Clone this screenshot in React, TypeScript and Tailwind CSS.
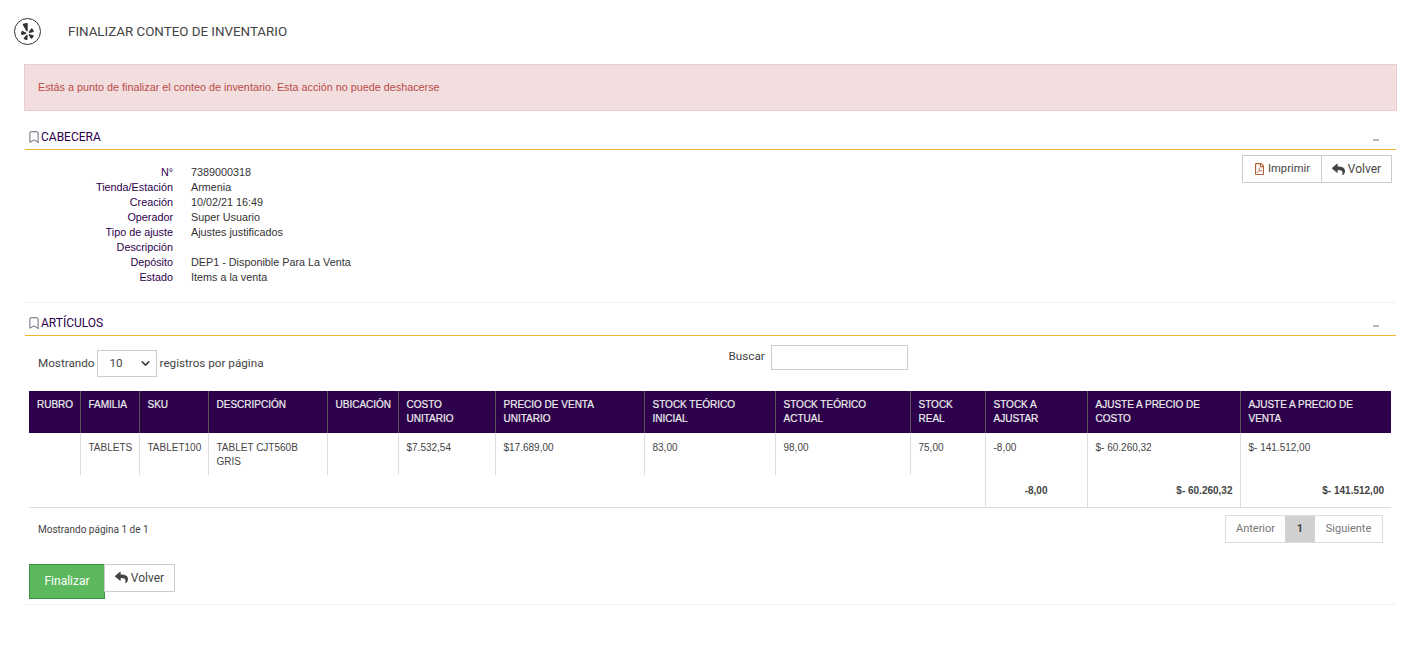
import { FaYelp, FaRegFilePdf, FaReply } from "react-icons/fa";
import { Bookmark, ChevronDown } from "lucide-react";

const headerInfo: [string, string][] = [
  ["N°", "7389000318"],
  ["Tienda/Estación", "Armenia"],
  ["Creación", "10/02/21 16:49"],
  ["Operador", "Super Usuario"],
  ["Tipo de ajuste", "Ajustes justificados"],
  ["Descripción", ""],
  ["Depósito", "DEP1 - Disponible Para La Venta"],
  ["Estado", "Items a la venta"],
];

const columns: { label: string; width: string }[] = [
  { label: "RUBRO", width: "w-[51px]" },
  { label: "FAMILIA", width: "w-[59px]" },
  { label: "SKU", width: "w-[69px]" },
  { label: "DESCRIPCIÓN", width: "w-[119px]" },
  { label: "UBICACIÓN", width: "w-[71px]" },
  { label: "COSTO UNITARIO", width: "w-[97px]" },
  { label: "PRECIO DE VENTA UNITARIO", width: "w-[149px]" },
  { label: "STOCK TEÓRICO INICIAL", width: "w-[131px]" },
  { label: "STOCK TEÓRICO ACTUAL", width: "w-[135px]" },
  { label: "STOCK REAL", width: "w-[75px]" },
  { label: "STOCK A AJUSTAR", width: "w-[102px]" },
  { label: "AJUSTE A PRECIO DE COSTO", width: "w-[153px]" },
  { label: "AJUSTE A PRECIO DE VENTA", width: "w-[151px]" },
];

const row = [
  "",
  "TABLETS",
  "TABLET100",
  "TABLET CJT560B GRIS",
  "",
  "$7.532,54",
  "$17.689,00",
  "83,00",
  "98,00",
  "75,00",
  "-8,00",
  "$- 60.260,32",
  "$- 141.512,00",
];

const SectionTitle = ({ title }: { title: string }) => (
  <div className="flex h-[26px] items-center justify-between border-b border-[#f0b432] pl-[2px] pr-[17px] font-['Roboto',sans-serif] text-xs text-[#2d004b]">
    <span className="flex items-center">
      <Bookmark className="h-[14px] w-[14px] text-[#5a6070]" strokeWidth={1.6} />
      {title}
    </span>
    <span className="mt-[6px] h-[2px] w-[6px] bg-[#bbb]" />
  </div>
);

const BackButton = ({ className }: { className: string }) => (
  <button
    type="button"
    className={`flex items-center justify-center gap-[3px] border border-[#ccc] bg-white text-xs text-[#444] ${className}`}
  >
    <FaReply className="h-[13px] w-[13px] text-[#444]" />
    Volver
  </button>
);

const App = () => {
  return (
    <main className="min-h-[657px] bg-white font-['Liberation_Sans',sans-serif]">
      <header className="flex h-[64px] items-center pl-[14px] pb-[1px]">
        <span className="flex h-[27px] w-[27px] items-center justify-center rounded-full border border-[#333]">
          <FaYelp className="h-[17px] w-[17px] text-[#333]" />
        </span>
        <h1 className="ml-[27px] mt-[1px] font-['Roboto',sans-serif] text-[13.35px] font-normal text-[#444]">
          FINALIZAR CONTEO DE INVENTARIO
        </h1>
      </header>

      <div className="ml-[24px] mr-[21px] flex h-[47px] items-center border border-[#ebccd1] bg-[#f2dede] px-[13px] text-[10.8px] text-[#b94a48]">
        Estás a punto de finalizar el conteo de inventario. Esta acción no puede deshacerse
      </div>

      <section className="ml-[25px] mr-[22px] mt-[13px] h-[179px] border-b border-[#f0f0f0]">
        <SectionTitle title="CABECERA" />
        <div className="flex justify-between pr-[4px]">
          <dl className="mt-[15px] grid grid-cols-[148px_1fr] gap-x-[18px] text-[10.8px] leading-[15px] text-[#333]">
            {headerInfo.map(([label, value]) => (
              <div key={label} className="contents">
                <dt className="text-right text-[#2d004b]">{label}</dt>
                <dd>{value}</dd>
              </div>
            ))}
          </dl>
          <div className="mt-[5px] flex h-[28px] font-['Roboto',sans-serif]">
            <button
              type="button"
              className="flex w-[80px] items-center justify-center gap-[3px] border border-[#ccc] bg-white text-[11.2px] text-[#444]"
            >
              <FaRegFilePdf className="h-[12px] w-[11px] text-[#b5613c]" />
              Imprimir
            </button>
            <BackButton className="-ml-px w-[71px]" />
          </div>
        </div>
      </section>

      <section className="ml-[25px] mr-[22px] mt-[7px]">
        <SectionTitle title="ARTÍCULOS" />
        <div className="relative flex h-[55px] items-start pl-[13px] pt-[14px] font-['Roboto',sans-serif] text-[11.7px] text-[#444]">
          <span className="leading-[27px]">Mostrando</span>
          <div className="ml-[2px] mr-[3px] flex h-[27px] w-[60px] items-center justify-between border border-[#ccc] pl-[12px] pr-[4px]">
            10
            <ChevronDown className="h-[13px] w-[13px] text-[#444]" strokeWidth={3} />
          </div>
          <span className="leading-[27px]">registros por página</span>
          <div className="ml-[465px] -mt-[5px] flex items-center gap-[6px]">
            <span className="mb-[2px]">Buscar</span>
            <span className="h-[25px] w-[137px] border border-[#ccc]" />
          </div>
        </div>

        <div className="ml-[4px] w-[1362px]">
          <table className="w-full table-fixed border-collapse text-[10px] leading-[14px]">
            <colgroup>
              {columns.map((col) => (
                <col key={col.label} className={col.width} />
              ))}
            </colgroup>
            <thead>
              <tr className="h-[42px] bg-[#2d004b] text-[#eee]">
                {columns.map((col) => (
                  <th
                    key={col.label}
                    className="border-l border-[#555] px-[8px] pb-[7px] pt-[7px] text-left align-top font-normal first:border-l-0 [-webkit-text-stroke:0.2px_#eee]"
                  >
                    {col.label}
                  </th>
                ))}
              </tr>
            </thead>
            <tbody className="text-[#444]">
              <tr className="h-[42px]">
                {row.map((cell, i) => (
                  <td
                    key={i}
                    className="border-l border-[#ddd] px-[8px] pb-[6px] pt-[8px] align-top first:border-l-0"
                  >
                    {cell}
                  </td>
                ))}
              </tr>
              <tr className="h-[32px] border-b border-[#ddd] font-bold">
                <td colSpan={10} />
                <td className="border-l border-[#ddd] px-[7px] text-right">
                  <span className="relative left-[-32px]">-8,00</span>
                </td>
                <td className="border-l border-[#ddd] px-[7px] text-right">$- 60.260,32</td>
                <td className="border-l border-[#ddd] px-[7px] text-right">$- 141.512,00</td>
              </tr>
            </tbody>
          </table>

          <div className="flex h-[43px] items-center justify-between pl-[9px] pr-[8px]">
            <span className="font-['Roboto',sans-serif] text-[10px] text-[#444]">Mostrando página 1 de 1</span>
            <div className="flex h-[28px] border border-[#ddd] font-['Roboto',sans-serif] text-[11px] text-[#777]">
              <span className="flex w-[59px] items-center justify-center">Anterior</span>
              <span className="flex w-[30px] items-center justify-center bg-[#d0d0d0] font-bold text-[#444]">1</span>
              <span className="flex w-[67px] items-center justify-center">Siguiente</span>
            </div>
          </div>

          <div className="mt-[13px] flex items-start font-['Roboto',sans-serif]">
            <button
              type="button"
              className="h-[35px] w-[76px] border border-[#3d9140] bg-[#5cb85c] text-xs text-white"
            >
              Finalizar
            </button>
            <BackButton className="-ml-px h-[28px] w-[71px]" />
          </div>
        </div>
        <div className="mt-[5px] border-b border-[#f0f0f0]" />
      </section>
    </main>
  );
};

export default App;
